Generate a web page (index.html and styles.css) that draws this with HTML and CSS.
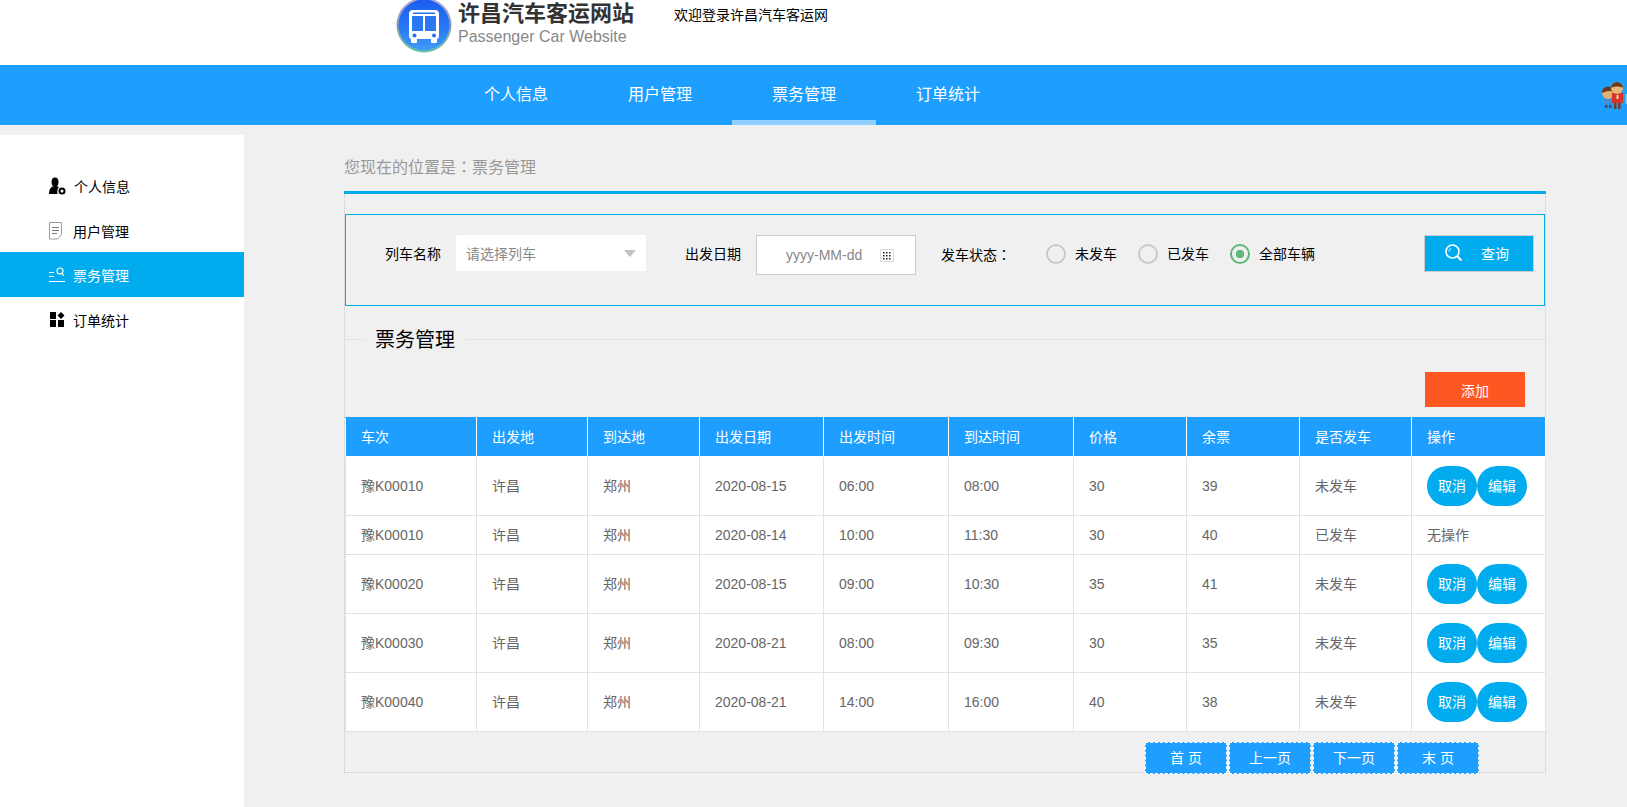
FILE: index.html
```html
<!DOCTYPE html>
<html lang="zh-CN">
<head>
<meta charset="utf-8">
<title>票务管理</title>
<link rel="stylesheet" href="styles.css">
</head>
<body>
<header class="top">
  <svg class="logo" viewBox="0 0 56 56" aria-hidden="true">
    <defs>
      <linearGradient id="ring" x1="0" y1="0" x2="0" y2="1">
        <stop offset="0" stop-color="#b9a7dc"/><stop offset=".5" stop-color="#8a9bb0"/><stop offset="1" stop-color="#6cc6a4"/>
      </linearGradient>
      <linearGradient id="disc" x1="0" y1="0" x2="0" y2="1">
        <stop offset="0" stop-color="#1a5df0"/><stop offset=".6" stop-color="#2a7cf5"/><stop offset="1" stop-color="#3f9bf8"/>
      </linearGradient>
    </defs>
    <circle cx="28" cy="28" r="27.5" fill="url(#ring)"/>
    <circle cx="28" cy="28" r="25.5" fill="url(#disc)"/>
    <path d="M17 13h22a4 4 0 0 1 4 4v22a3 3 0 0 1-2 3v3a1 1 0 0 1-1 1h-4a1 1 0 0 1-1-1v-3H21v3a1 1 0 0 1-1 1h-4a1 1 0 0 1-1-1v-3a3 3 0 0 1-2-3V17a4 4 0 0 1 4-4z" fill="#fff"/>
    <rect x="17" y="15.500" width="22" height="1.500" fill="#2a6ef0"/>
    <path d="M16 19h11v15H16zM29 19h11v15H29z" fill="#2a78f2"/>
    <circle cx="18.500" cy="38.500" r="2" fill="#2a6ef0"/>
    <circle cx="38" cy="38.500" r="2" fill="#2a6ef0"/>
  </svg>
  <div class="brand">
    <div class="brand-name">许昌汽车客运网站</div>
    <div class="brand-sub">Passenger Car Website</div>
  </div>
  <div class="welcome">欢迎登录许昌汽车客运网</div>
</header>

<nav class="nav">
  <a class="nav-item">个人信息</a>
  <a class="nav-item">用户管理</a>
  <a class="nav-item nav-active">票务管理</a>
  <a class="nav-item">订单统计</a>
  <svg class="people" viewBox="0 0 27 28" aria-hidden="true">
    <rect x="4" y="15" width="8" height="9" fill="#3f8fd8"/>
    <rect x="5" y="23" width="2.500" height="3" fill="#33507a"/>
    <rect x="9" y="23" width="2.500" height="3" fill="#33507a"/>
    <circle cx="8" cy="11" r="6" fill="#e0b070"/>
    <path d="M2 11a6 6 0 0 1 12-1c-4-2-8-1-12 1z" fill="#6a3a1a"/>
    <rect x="12" y="11" width="11" height="10" fill="#d8322a"/>
    <rect x="14" y="21" width="2.500" height="6" fill="#7a3a20"/>
    <rect x="18" y="21" width="2.500" height="6" fill="#7a3a20"/>
    <circle cx="17" cy="6" r="6" fill="#e4b678"/>
    <path d="M11 6a6 6 0 0 1 12 0c-3-2-9-2-12 0z" fill="#6a3a1a"/>
    <rect x="16.500" y="13" width="2" height="4" fill="#f4d6a0"/>
    <rect x="25.500" y="12" width="1.500" height="10" fill="#8ec9ff"/>
  </svg>
</nav>

<div class="layout">
  <aside class="side">
    <a class="side-item side-low">
      <svg class="side-icon" viewBox="0 0 18 18" aria-hidden="true"><ellipse cx="7" cy="5" rx="3.500" ry="4.500" fill="#000"/><path d="M1 17c0-5 2-8 6-8 1.500 0 3 .5 4 1.300-1.500 1-2 3.500-1.500 6.700z" fill="#000"/><circle cx="14" cy="14" r="2.500" fill="none" stroke="#000" stroke-width="2"/></svg>
      <span class="side-label side-label-first">个人信息</span>
    </a>
    <a class="side-item side-low">
      <svg class="side-icon" viewBox="0 0 18 18" aria-hidden="true"><path d="M1.500 .5h12v12l-4 4.500h-8z" fill="none" stroke="#a69a90" stroke-width="1"/><path d="M4 5.500h7M4 8.500h7M4 11.500h5" stroke="#777" stroke-width="1"/></svg>
      <span class="side-label">用户管理</span>
    </a>
    <a class="side-item side-active">
      <svg class="side-icon" viewBox="0 0 18 18" aria-hidden="true"><path d="M1 6.500h5M1 10.500h5M1 15.500h16" stroke="#fff" stroke-width="1" fill="none"/><circle cx="12" cy="5" r="3" stroke="#fff" stroke-width="1.200" fill="none"/><path d="M14 7.500l2 2.500" stroke="#fff" stroke-width="1.200"/></svg>
      <span class="side-label">票务管理</span>
    </a>
    <a class="side-item">
      <svg class="side-icon" viewBox="0 0 18 18" aria-hidden="true"><rect x="2" y="1" width="6" height="7" fill="#000"/><path d="M13 1l3.500 3.500L13 8 9.500 4.500z" fill="#000"/><rect x="2" y="9" width="6" height="7" fill="#000"/><rect x="10" y="9" width="6" height="7" fill="#000"/></svg>
      <span class="side-label">订单统计</span>
    </a>
  </aside>

  <main class="main">
    <div class="crumb">您现在的位置是<span class="colon" lang="zh-TW">：</span>票务管理</div>
    <div class="panel">
      <form class="search">
        <span class="field-label label-train">列车名称</span>
        <div class="select">
          <span>请选择列车</span>
          <i class="caret"></i>
        </div>
        <span class="field-label label-date">出发日期</span>
        <div class="date">
          <span>yyyy-MM-dd</span>
          <svg class="date-icon" viewBox="0 0 14 13" aria-hidden="true"><rect x=".5" y=".5" width="13" height="12" fill="none" stroke="#ddd"/><g fill="#222"><rect x="3" y="3" width="1.500" height="1.500"/><rect x="6" y="3" width="1.500" height="1.500"/><rect x="9" y="3" width="1.500" height="1.500"/><rect x="3" y="6" width="1.500" height="1.500"/><rect x="6" y="6" width="1.500" height="1.500"/><rect x="9" y="6" width="1.500" height="1.500"/><rect x="3" y="9" width="1.500" height="1.500"/><rect x="6" y="9" width="1.500" height="1.500"/><rect x="9" y="9" width="1.500" height="1.500"/></g></svg>
        </div>
        <span class="field-label label-status">发车状态<span class="colon" lang="zh-TW">：</span></span>
        <div class="radios">
          <span class="radio"><i class="radio-dot"></i>未发车</span>
          <span class="radio"><i class="radio-dot"></i>已发车</span>
          <span class="radio"><i class="radio-dot radio-on"></i>全部车辆</span>
        </div>
        <button type="button" class="query">
          <svg class="query-icon" viewBox="0 0 18 18" aria-hidden="true"><circle cx="7.500" cy="7.500" r="6.500" fill="none" stroke="#fff" stroke-width="1.500"/><path d="M12.500 12.500l4 4" stroke="#fff" stroke-width="2"/><path d="M4 7.500a3.500 3.500 0 0 1 2-3" fill="none" stroke="#fff"/></svg>
          查询
        </button>
      </form>

      <fieldset class="section">
        <legend class="section-title">票务管理</legend>
        <div class="actions"><button type="button" class="add">添加</button></div>
      </fieldset>

      <table class="grid">
        <colgroup>
          <col class="c1"><col class="c2"><col class="c3"><col class="c4"><col class="c5">
          <col class="c6"><col class="c7"><col class="c8"><col class="c9"><col class="c10">
        </colgroup>
        <thead>
          <tr><th>车次</th><th>出发地</th><th>到达地</th><th>出发日期</th><th>出发时间</th><th>到达时间</th><th>价格</th><th>余票</th><th>是否发车</th><th>操作</th></tr>
        </thead>
        <tbody>
          <tr><td>豫K00010</td><td>许昌</td><td>郑州</td><td>2020-08-15</td><td>06:00</td><td>08:00</td><td>30</td><td>39</td><td>未发车</td><td class="ops"><a class="pill">取消</a><a class="pill">编辑</a></td></tr>
          <tr><td>豫K00010</td><td>许昌</td><td>郑州</td><td>2020-08-14</td><td>10:00</td><td>11:30</td><td>30</td><td>40</td><td>已发车</td><td>无操作</td></tr>
          <tr><td>豫K00020</td><td>许昌</td><td>郑州</td><td>2020-08-15</td><td>09:00</td><td>10:30</td><td>35</td><td>41</td><td>未发车</td><td class="ops"><a class="pill">取消</a><a class="pill">编辑</a></td></tr>
          <tr><td>豫K00030</td><td>许昌</td><td>郑州</td><td>2020-08-21</td><td>08:00</td><td>09:30</td><td>30</td><td>35</td><td>未发车</td><td class="ops"><a class="pill">取消</a><a class="pill">编辑</a></td></tr>
          <tr><td>豫K00040</td><td>许昌</td><td>郑州</td><td>2020-08-21</td><td>14:00</td><td>16:00</td><td>40</td><td>38</td><td>未发车</td><td class="ops"><a class="pill">取消</a><a class="pill">编辑</a></td></tr>
        </tbody>
      </table>

      <div class="pager">
        <a class="page">首 页</a>
        <a class="page">上一页</a>
        <a class="page">下一页</a>
        <a class="page">末 页</a>
      </div>
    </div>
  </main>
</div>
</body>
</html>
```
FILE: styles.css
```css
* { box-sizing: border-box; }
html, body { margin: 0; height: 807px; overflow: hidden; }
body {
  background: #f0f0f0;
  font-family: "Liberation Sans", "Noto Sans CJK SC", sans-serif;
  font-size: 14px;
  color: #000;
}
.colon { font-family: "Noto Sans CJK TC", sans-serif; }

/* header */
.top {
  height: 65px;
  background: #fff;
  display: flex;
  align-items: flex-start;
  padding-left: 396px;
  overflow: hidden;
}
.logo { width: 56px; height: 56px; margin-top: -3px; flex: none; }
.brand { margin-left: 6px; width: 215px; }
.brand-name { font-size: 22px; font-weight: 700; line-height: 26px; margin-top: 1px; color: #333; }
.brand-sub { font-size: 16px; line-height: 20px; margin-top: 0; color: #888; }
.welcome { font-size: 14px; line-height: 20px; margin-top: 5px; margin-left: 1px; }

/* nav */
.nav {
  height: 60px;
  background: #1e9fff;
  display: flex;
  padding-left: 444px;
}
.nav-item {
  width: 144px;
  height: 60px;
  line-height: 60px;
  text-align: center;
  font-size: 16px;
  color: #fff;
}
.nav-active { border-bottom: 5px solid #8fcfff; }
.people { width: 27px; height: 28px; margin: 17px 0 0 auto; flex: none; }

/* layout */
.layout { display: flex; margin-top: 10px; height: 672px; }
.side { width: 244px; flex: none; background: #fff; padding-top: 27px; }
.side-item {
  height: 45px;
  display: flex;
  align-items: center;
  padding-left: 48px;
  color: #000;
}
.side-low { padding-top: 2px; }
.side-active { background: #00acee; color: #fff; }
.side-icon { width: 18px; height: 18px; flex: none; }
.side-label { margin-left: 7px; }
.side-label-first { margin-left: 8px; }

.main { width: 1202px; margin-left: 100px; flex: none; }
.crumb { box-sizing: content-box; height: 56px; line-height: 62px; font-size: 16px; color: #999; border-bottom: 3px solid #00acee; }
.panel {
  height: 579px;
  border: 1px dotted #c8c8c8;
  border-top: 0;
  padding-top: 20px;
}

/* search */
.search {
  height: 92px;
  border: 1px solid #00acee;
  display: flex;
  align-items: flex-start;
  padding-top: 20px;
}
.field-label { line-height: 38px; flex: none; }
.label-train { margin-left: 39px; width: 56px; }
.select {
  width: 190px;
  height: 36px;
  margin-left: 15px;
  background: #fff;
  border-radius: 2px;
  padding: 0 10px;
  display: flex;
  align-items: center;
  justify-content: space-between;
  color: #888;
}
.caret { border: 6px solid transparent; border-top: 7px solid #c2c2c2; border-bottom: 0; }
.label-date { margin-left: 39px; width: 56px; }
.date {
  width: 160px;
  height: 40px;
  margin-left: 15px;
  background: #fff;
  border: 1px solid #ccc;
  display: flex;
  align-items: center;
  padding-left: 29px;
  color: #888;
}
.date-icon { width: 14px; height: 13px; margin-left: 18px; }
.label-status { margin-left: 25px; width: 70px; }
.radios { display: flex; margin-left: 35px; height: 38px; align-items: center; }
.radio { display: flex; align-items: center; margin-right: 21px; line-height: 20px; }
.radio-dot {
  width: 20px;
  height: 20px;
  margin-right: 9px;
  border: 2px solid #c8c8c8;
  border-radius: 50%;
  background: #f0f0f0;
  display: block;
}
.radio-on { border-color: #5fb878; background: radial-gradient(circle, #5fb878 0 4px, #f0f0f0 4.5px); }
.query {
  margin-left: auto;
  margin-right: 10px;
  width: 110px;
  height: 37px;
  padding: 0 0 2px 20px;
  background: #00acee;
  border: 1px solid #ccc;
  color: #fff;
  font: inherit;
  display: flex;
  align-items: center;
  gap: 18px;
}
.query-icon { width: 18px; height: 18px; flex: none; }

/* section */
.section {
  margin: 18px 0 0;
  padding: 0;
  min-width: 0;
  border: 0;
  border-top: 1px solid #e4e4e4;
  height: 93px;
}
.section-title {
  margin-left: 20px;
  padding: 2px 10px 0;
  font-size: 20px;
  line-height: 28px;
  font-weight: 400;
}
.actions { display: flex; justify-content: flex-end; padding: 18px 20px 0 0; }
.add {
  width: 100px;
  height: 35px;
  padding: 0;
  border: 0;
  background: #ff5722;
  color: #fff;
  font: inherit;
}

/* table */
.grid {
  width: 1200px;
  table-layout: fixed;
  border-collapse: collapse;
  background: #fff;
  color: #666;
}
.c1 { width: 131px; } .c2 { width: 111px; } .c3 { width: 112px; } .c4 { width: 124px; } .c5 { width: 125px; }
.c6 { width: 125px; } .c7 { width: 113px; } .c8 { width: 113px; } .c9 { width: 112px; } .c10 { width: 134px; }
.grid th, .grid td {
  border: 1px solid #e2e2e2;
  padding: 9px 15px;
  line-height: 20px;
  text-align: left;
  font-weight: 400;
}
.grid th { background: #1e9fff; color: #fff; padding: 9px 15px; height: 38px; border-color: #fff; border-top-color: #1e9fff; }
.ops { white-space: nowrap; font-size: 0; }
.pill {
  display: inline-block;
  width: 50px;
  height: 40px;
  line-height: 40px;
  border-radius: 20px;
  background: #00acee;
  color: #fff;
  text-align: center;
  font-size: 14px;
}

/* pager */
.pager {
  display: flex;
  justify-content: flex-end;
  gap: 2px;
  padding-right: 66px;
  margin-top: 10px;
}
.page {
  width: 82px;
  height: 32px;
  line-height: 30px;
  text-align: center;
  background: #1e9fff;
  border: 1px dashed #fff;
  color: #fff;
}
```
